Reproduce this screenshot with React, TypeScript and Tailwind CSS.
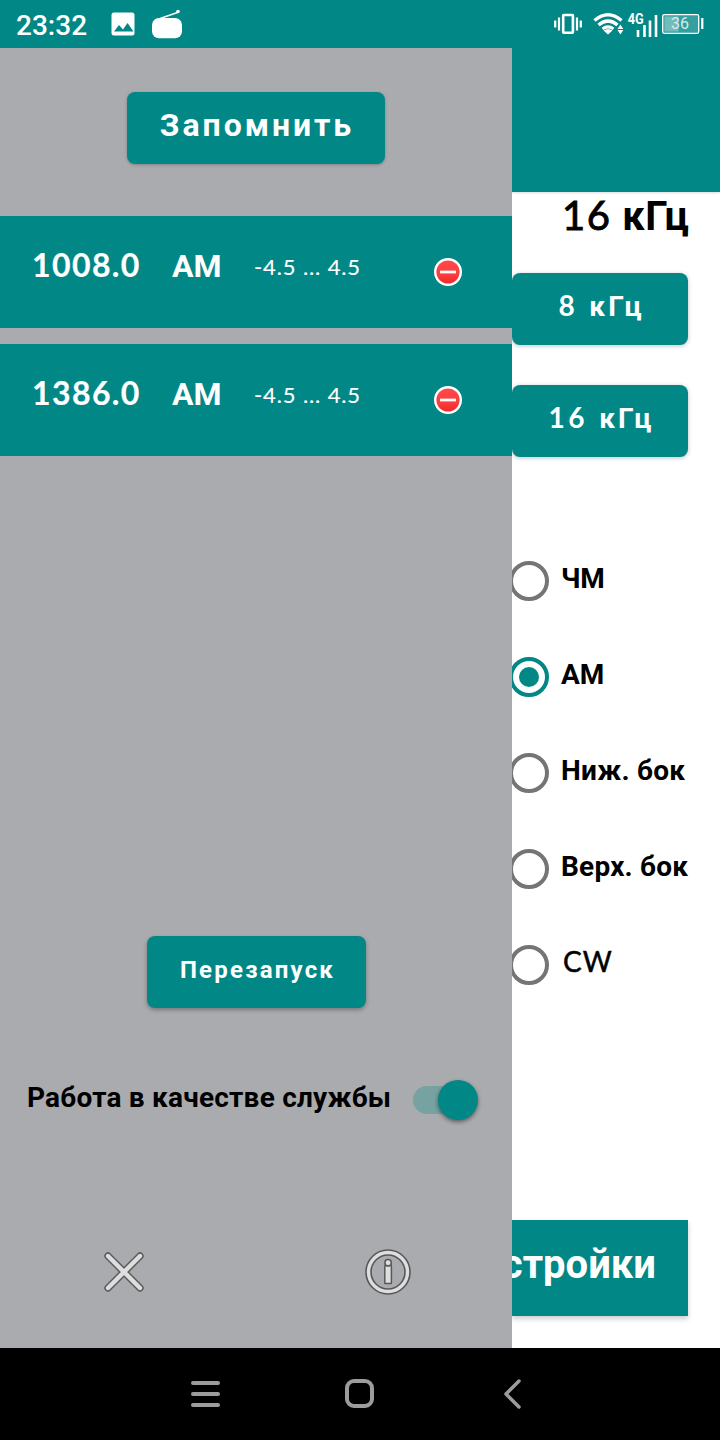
import React from "react";

const stations = [
  { freq: "1008.0", mode: "AM", range: "-4.5 ... 4.5" },
  { freq: "1386.0", mode: "AM", range: "-4.5 ... 4.5" },
];

const modes = [
  { label: "ЧМ", checked: false, className: "pb-[5px] tracking-[-0.3px]" },
  { label: "АМ", checked: true, className: "pb-[5px] tracking-[0px]" },
  { label: "Ниж. бок", checked: false, className: "pb-[5px] tracking-[0.25px]" },
  { label: "Верх. бок", checked: false, className: "pb-[5px] tracking-[0.2px]" },
  {
    label: "CW",
    checked: false,
    className: "pb-[8px] pl-[2px] font-['Lato',sans-serif] font-normal tracking-[1px] text-[27px] [-webkit-text-stroke:0.5px_#000]",
  },
];

function StatusBar() {
  return (
    <header className="flex h-12 w-full shrink-0 items-center bg-[#018786] text-white">
      <span className="ml-4 w-[94px] pt-[3px] text-[28px] leading-[48px] font-medium">23:32</span>
      <svg width="26" height="26" viewBox="0 0 26 26" className="-mt-[1px]">
        <rect x="1.5" y="1.5" width="23" height="23" rx="2.5" fill="#fff" />
        <path d="M4 20.500l5-6.500 4 4.500 4.500-6.500 6 8.500z" fill="#018786" />
      </svg>
      <svg width="34" height="32" viewBox="0 0 34 32" className="ml-[15px]">
        <path d="M9 10.500L28 4" stroke="#fff" strokeWidth="1.400" />
        <circle cx="27" cy="3.500" r="1.800" fill="#fff" />
        <rect x="1" y="10" width="30" height="20.300" rx="7" fill="#fff" />
      </svg>
      <div className="ml-auto flex h-12 w-[168px]">
        <svg width="168" height="48" viewBox="552 0 168 48">
          <g stroke="#fff" fill="none" strokeWidth="2.200">
            <path d="M555.200 20.500v7M559 17.500v13M577 17.500v13M580.800 20.500v7" />
            <rect x="563.200" y="15" width="9.700" height="17.800" strokeWidth="2.600" rx="0.500" />
          </g>
          <g fill="none" stroke="#fff" strokeWidth="3.400">
            <path d="M594.500 20.500q13.500 -11.500 27 0" />
            <path d="M598.500 25q9.500 -8 19 0" />
            <path d="M602.500 28.900q5.500 -4 11 0" strokeWidth="3" />
          </g>
          <path d="M603.500 30.500q4.500-3 9 0l-4.500 4z" fill="#fff" />
          <path d="M617.500 28.900l2.900-4.400 2.900 4.400zM617.500 30.100l2.900 4.400 2.900-4.400z" fill="#fff" />
          <path d="M638 30v7M644.500 25v12M650 20.500v16.500M656 15v22" stroke="#fff" strokeWidth="2.600" />
          <text x="627.800" y="24" fontSize="15" fontWeight="700" fill="#fff" textLength="16" lengthAdjust="spacingAndGlyphs">4G</text>
          <rect x="662.700" y="14.700" width="36" height="18.600" rx="1.500" fill="#349f9e" stroke="#fff" strokeWidth="1.300" />
          <rect x="664.500" y="16.500" width="14" height="15" fill="#74bcbb" />
          <path d="M702.300 18v11" stroke="#fff" strokeWidth="2.200" />
          <text x="671" y="29.300" fontSize="16" fill="#d5eceb" textLength="18">36</text>
        </svg>
      </div>
    </header>
  );
}

function StationRow({ freq, mode, range }: { freq: string; mode: string; range: string }) {
  return (
    <li className="flex h-28 items-center bg-[#018786] pl-8 font-['Lato',sans-serif] text-white">
      <span className="w-[140px] pb-[14px] text-[32px] leading-10 font-bold tracking-[1.4px] [-webkit-text-stroke:0.2px_#fff]">{freq}</span>
      <span className="w-[82px] pb-[12px] font-['Roboto',sans-serif] text-[32px] leading-10 font-bold">{mode}</span>
      <span className="w-[178px] pb-[10px] text-[22px] leading-10 tracking-[0.88px] whitespace-pre [-webkit-text-stroke:0.15px_#fff]">{range}</span>
      <svg width="32" height="32" viewBox="0 0 32 32">
        <defs>
          <linearGradient id="removeFill" x1="0" y1="0" x2="0" y2="1">
            <stop offset="0" stopColor="#ff4b4b" />
            <stop offset="0.600" stopColor="#ff3b3b" />
            <stop offset="1" stopColor="#e82b2b" />
          </linearGradient>
        </defs>
        <circle cx="16" cy="16" r="12.800" fill="url(#removeFill)" stroke="#fff" strokeWidth="2.400" />
        <path d="M8 16h16" stroke="#fff" strokeWidth="2.800" />
      </svg>
    </li>
  );
}

function Drawer() {
  return (
    <aside className="flex w-[512px] shrink-0 flex-col bg-[#aaabae]">
      <button className="mt-11 ml-[127px] h-[72px] w-[258px] rounded-lg bg-[#018786] pb-[6px] pl-[2px] text-[32px] leading-[66px] font-bold tracking-[2.95px] text-white shadow-[0_1px_3px_rgba(0,0,0,0.25)]">
        Запомнить
      </button>
      <ul className="mt-[52px] flex flex-col gap-4">
        {stations.map((s) => (
          <StationRow key={s.freq} {...s} />
        ))}
      </ul>
      <button className="mt-auto ml-[147px] h-[72px] w-[219px] rounded-lg bg-[#018786] pb-[4px] pl-[2px] text-[24px] leading-[68px] font-bold tracking-[2.2px] text-white shadow-[0_2px_4px_rgba(0,0,0,0.3)]">
        Перезапуск
      </button>
      <div className="mt-[68px] flex h-12 items-center">
        <span className="ml-[27px] w-[386px] pb-[5px] text-[28px] leading-10 font-bold tracking-[0.22px] whitespace-nowrap">
          Работа в качестве службы
        </span>
        <div className="flex h-7 w-[60px] items-center justify-end rounded-full bg-[#77a2a2]">
          <div className="-mr-[5px] size-10 shrink-0 rounded-full bg-[#018786] shadow-[0_2px_4px_rgba(0,0,0,0.45)]" />
        </div>
      </div>
      <div className="mt-[124px] mb-[52px] flex h-12">
        <svg width="48" height="48" viewBox="0 0 48 48" className="ml-[100px]">
          <path d="M8 8L40 40M40 8L8 40" stroke="#5b5b5d" strokeWidth="7.400" strokeLinecap="round" />
          <path d="M8 8L40 40M40 8L8 40" stroke="#dededf" strokeWidth="4.400" strokeLinecap="round" />
        </svg>
        <svg width="48" height="48" viewBox="0 0 48 48" className="ml-[216px]" fill="none">
          <circle cx="24" cy="24" r="19.500" stroke="#58585a" strokeWidth="6.600" />
          <circle cx="24" cy="24" r="19.500" stroke="#dededf" strokeWidth="3.400" />
          <rect x="20.800" y="17.500" width="6.600" height="18" rx="0.500" fill="#dededf" stroke="#58585a" strokeWidth="1.500" />
          <circle cx="24.100" cy="14.800" r="3.200" fill="#dededf" stroke="#58585a" strokeWidth="1.500" />
        </svg>
      </div>
    </aside>
  );
}

function BandButton({ digits, className }: { digits: string; className: string }) {
  return (
    <button
      className={
        "h-[72px] w-44 shrink-0 rounded-lg bg-[#018786] pb-[7px] pl-[3px] text-[28px] leading-[65px] font-bold tracking-[3.1px] text-white shadow-[0_1px_4px_rgba(0,0,0,0.25)] " +
        className
      }
    >
      <span className="mr-[1px] font-['Lato',sans-serif] tracking-[3.6px]">{digits}</span> кГц
    </button>
  );
}

function Content() {
  return (
    <main className="flex min-w-0 flex-1 flex-col overflow-hidden bg-white">
      <div className="h-36 shrink-0 bg-[#018786] shadow-[0_1px_2px_rgba(0,0,0,0.15)]" />
      <div className="h-[81px] shrink-0 pl-[50px] text-[40px] leading-[46px] font-bold tracking-[0.6px] whitespace-nowrap">
        <span className="font-['Lato',sans-serif] font-normal tracking-[1.6px] [-webkit-text-stroke:0.9px_#000]">16</span> кГц
      </div>
      <BandButton digits="8" className="" />
      <BandButton digits="16" className="mt-10" />
      <div className="mt-[76px] flex flex-col">
        {modes.map((m) => (
          <label key={m.label} className="flex h-24 items-center">
            <svg width="40" height="40" viewBox="0 0 40 40" className="-ml-[3px] shrink-0">
              <circle cx="20" cy="20" r="18" fill="none" stroke={m.checked ? "#018786" : "#757575"} strokeWidth="4" />
              {m.checked && <circle cx="20" cy="20" r="10" fill="#018786" />}
            </svg>
            <span className={"ml-3 text-[28px] leading-10 font-bold whitespace-nowrap " + m.className}>{m.label}</span>
          </label>
        ))}
      </div>
      <button className="mt-auto mb-8 flex h-24 w-44 shrink-0 justify-end bg-[#018786] pr-8 text-[40px] leading-[89px] font-bold text-white shadow-[0_3px_5px_rgba(0,0,0,0.2)]">
        Настройки
      </button>
    </main>
  );
}

function NavBar() {
  return (
    <nav className="flex h-[92px] shrink-0 items-center bg-black">
      <svg width="720" height="92" viewBox="0 0 720 92" fill="none" stroke="#9c9c9c" strokeWidth="4" strokeLinecap="round" strokeLinejoin="round">
        <path d="M193 35h25M193 46h25M193 57h25" />
        <rect x="347" y="33" width="25" height="25" rx="7" />
        <path d="M519 33l-13 13 13 13" strokeWidth="3.500" />
      </svg>
    </nav>
  );
}

export default function App() {
  return (
    <div className="flex h-[1440px] w-[720px] flex-col overflow-hidden bg-white font-['Roboto',sans-serif] text-black">
      <StatusBar />
      <div className="flex min-h-0 flex-1">
        <Drawer />
        <Content />
      </div>
      <NavBar />
    </div>
  );
}
